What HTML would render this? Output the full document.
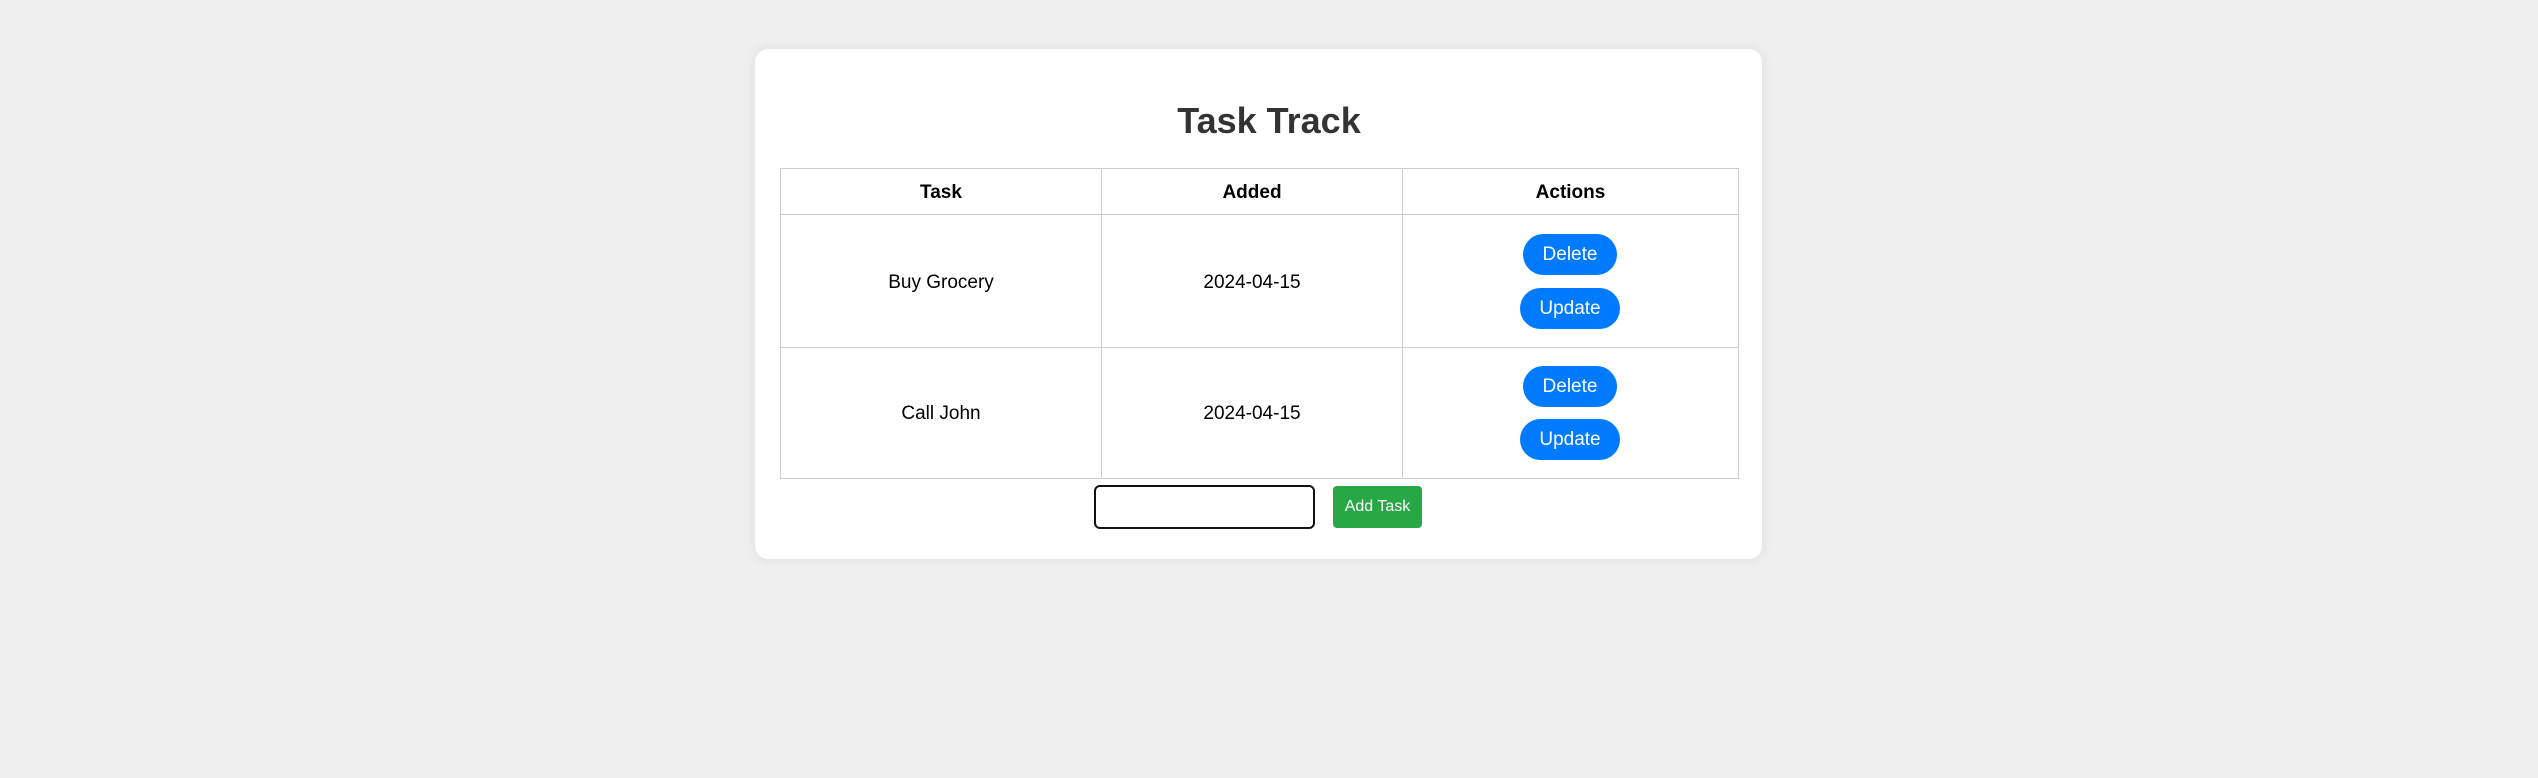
<!DOCTYPE html>
<html><head><style>
html,body{margin:0;padding:0;background:#efefef;width:2538px;height:778px;overflow:hidden;font-family:"Liberation Sans",Arial,sans-serif;}
.card{position:absolute;left:755px;top:49px;width:1007px;height:510px;background:#fff;border-radius:13px;box-shadow:0 0 12px rgba(0,0,0,0.08);}
h1{position:absolute;left:0;right:0;top:99px;margin:0;text-align:center;font-size:36px;font-weight:bold;color:#333;line-height:44px;}
.cell{position:absolute;box-sizing:border-box;display:flex;align-items:center;justify-content:center;font-size:19px;color:#000;}
.line{position:absolute;background:#ccc;}
.btn{position:absolute;background:#007bff;color:#fff;border-radius:21px;font-size:19px;display:flex;align-items:center;justify-content:center;height:41px;}
</style></head><body>
<div class="card"></div>
<h1>Task Track</h1>
<div class="line" style="left:780px;top:168px;width:959px;height:1px"></div>
<div class="line" style="left:780px;top:214px;width:959px;height:1px"></div>
<div class="line" style="left:780px;top:347px;width:959px;height:1px"></div>
<div class="line" style="left:780px;top:478px;width:959px;height:1px"></div>
<div class="line" style="left:780px;top:168px;width:1px;height:311px"></div>
<div class="line" style="left:1101px;top:168px;width:1px;height:311px"></div>
<div class="line" style="left:1402px;top:168px;width:1px;height:311px"></div>
<div class="line" style="left:1738px;top:168px;width:1px;height:311px"></div>
<div class="cell" style="left:781px;top:171px;width:320px;height:44px;font-weight:bold">Task</div>
<div class="cell" style="left:1102px;top:171px;width:300px;height:44px;font-weight:bold">Added</div>
<div class="cell" style="left:1403px;top:171px;width:335px;height:44px;font-weight:bold">Actions</div>
<div class="cell" style="left:781px;top:218px;width:320px;height:130px">Buy Grocery</div>
<div class="cell" style="left:1102px;top:218px;width:300px;height:130px">2024-04-15</div>
<div class="cell" style="left:781px;top:349px;width:320px;height:129px">Call John</div>
<div class="cell" style="left:1102px;top:349px;width:300px;height:129px">2024-04-15</div>
<div class="btn" style="left:1523px;top:234px;width:94px">Delete</div>
<div class="btn" style="left:1520px;top:288px;width:100px">Update</div>
<div class="btn" style="left:1523px;top:366px;width:94px">Delete</div>
<div class="btn" style="left:1520px;top:419px;width:100px">Update</div>
<div style="position:absolute;left:1094px;top:485px;width:221px;height:44px;box-sizing:border-box;border:2px solid #111;border-radius:6px;background:#fff"></div>
<div style="position:absolute;left:1333px;top:486px;width:89px;height:42px;background:#28a745;border-radius:4px;color:#fff;font-size:16px;display:flex;align-items:center;justify-content:center">Add Task</div>
</body></html>
